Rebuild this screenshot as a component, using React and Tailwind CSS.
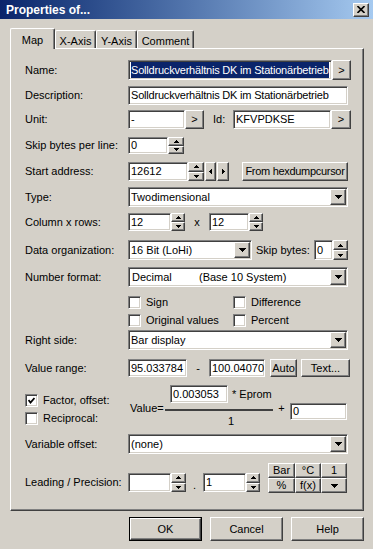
const sunken = "bg-white border border-t-[#808080] border-l-[#808080] border-b-white border-r-white shadow-[inset_1px_1px_0_#404040,inset_-1px_-1px_0_#d4d0c8]"
const raised = "bg-[#d4d0c8] border border-t-white border-l-white border-b-[#404040] border-r-[#404040] shadow-[inset_-1px_-1px_0_#808080]"

const Up = () => <svg width="5" height="3" viewBox="0 0 5 3" shapeRendering="crispEdges"><polygon points="0,3 5,3 2.5,0" fill="#000" /></svg>
const Dn = ({ w = 5, h = 3 }) => <svg width={w} height={h} viewBox={`0 0 ${w} ${h}`} shapeRendering="crispEdges"><polygon points={`0,0 ${w},0 ${w / 2},${h}`} fill="#000" /></svg>
const Lt = () => <svg width="3" height="5" viewBox="0 0 3 5" shapeRendering="crispEdges"><polygon points="3,0 3,5 0,2.5" fill="#000" /></svg>
const Rt = () => <svg width="3" height="5" viewBox="0 0 3 5" shapeRendering="crispEdges"><polygon points="0,0 0,5 3,2.5" fill="#000" /></svg>

function Label({ children }) {
  return <div className="w-[103px] shrink-0 whitespace-nowrap">{children}</div>
}

function Input({ cls, sel, children }) {
  return (
    <div className={`${sunken} ${cls} shrink-0 flex items-center pl-[2px] overflow-hidden whitespace-nowrap`}>
      {sel ? <span className="bg-[#0a246a] text-white">{children}</span> : children}
    </div>
  )
}

function Btn({ cls, children }) {
  return <div className={`${raised} ${cls} shrink-0 flex items-center justify-center whitespace-nowrap`}>{children}</div>
}

function Combo({ cls, children }) {
  return (
    <div className={`${sunken} ${cls} shrink-0 flex items-center pl-[2px] pr-[1px]`}>
      <div className="flex-1 whitespace-nowrap overflow-hidden">{children}</div>
      <Btn cls="w-[16px] h-[16px]"><Dn w={7} h={4} /></Btn>
    </div>
  )
}

function Spin({ cls }) {
  return (
    <div className={`${cls} shrink-0 flex flex-col`}>
      <Btn cls="flex-1"><Up /></Btn>
      <Btn cls="flex-1"><Dn /></Btn>
    </div>
  )
}

function Check({ on }) {
  return (
    <div className={`${sunken} w-[13px] h-[13px] shrink-0 flex items-center justify-center`}>
      {on && <svg width="7" height="7" viewBox="0 0 7 7"><polyline points="0.5,3 2.5,5.5 6.5,1" fill="none" stroke="#000" strokeWidth="1.8" /></svg>}
    </div>
  )
}

function Tab({ cls, children }) {
  return (
    <div className={`bg-[#d4d0c8] border-t border-l border-t-white border-l-white border-r border-r-[#404040] shadow-[inset_-1px_0_0_#808080] rounded-t-[2px] flex justify-center ${cls}`}>
      {children}
    </div>
  )
}

export default function App() {
  return (
    <div className="w-[373px] h-[549px] bg-[#d4d0c8] overflow-hidden text-[11px] text-black font-['Liberation_Sans',Arial,sans-serif]">
      {/* title bar */}
      <div className="h-[19px] flex items-center bg-linear-to-r from-[#0a246a] to-[#a6caf0]">
        <span className="pl-[6px] text-white font-bold text-[12px]">Properties of...</span>
        <div className={`${raised} ml-auto mr-[4px] w-[16px] h-[14px] flex items-center justify-center`}>
          <svg width="8" height="7" viewBox="0 0 8 7"><path d="M0.5 0 L7.5 7 M7.5 0 L0.5 7" stroke="#000" strokeWidth="1.6" /></svg>
        </div>
      </div>

      {/* tabs */}
      <div className="mt-[9px] h-[21px] pl-[10px] flex items-end relative z-10">
        <Tab cls="w-[45px] h-[21px] pt-[3px]">Map</Tab>
        <Tab cls="w-[41px] h-[18px] mb-[1px] pt-[2px]">X-Axis</Tab>
        <Tab cls="w-[41px] h-[18px] mb-[1px] pt-[2px]">Y-Axis</Tab>
        <Tab cls="w-[57px] h-[18px] mb-[1px] pt-[2px]">Comment</Tab>
      </div>

      {/* panel */}
      <div className="mt-[-1px] ml-[10px] w-[354px] h-[463px] border border-t-white border-l-white border-b-[#404040] border-r-[#404040] shadow-[inset_-1px_-1px_0_#808080] flex flex-col pl-[14px]">
        <div className="mt-[11px] h-[20px] flex items-center">
          <Label>Name:</Label>
          <Input cls="w-[204px] h-[20px] tracking-[-0.2px]" sel>Solldruckverhältnis DK im Stationärbetrieb</Input>
          <Btn cls="w-[19px] h-[20px]">&gt;</Btn>
        </div>

        <div className="mt-[6px] h-[19px] flex items-center">
          <Label>Description:</Label>
          <Input cls="w-[220px] h-[19px] tracking-[-0.2px]">Solldruckverhältnis DK im Stationärbetrieb</Input>
        </div>

        <div className="mt-[5px] h-[19px] flex items-center">
          <Label>Unit:</Label>
          <Input cls="w-[57px] h-[19px]">-</Input>
          <Btn cls="w-[19px] h-[19px]">&gt;</Btn>
          <span className="ml-[9px] w-[20px]">Id:</span>
          <Input cls="w-[98px] h-[19px]">KFVPDKSE</Input>
          <Btn cls="w-[20px] h-[19px]">&gt;</Btn>
        </div>

        <div className="mt-[8px] h-[17px] flex items-center">
          <Label>Skip bytes per line:</Label>
          <Input cls="w-[40px] h-[17px]">0</Input>
          <Spin cls="w-[16px] h-[17px]" />
        </div>

        <div className="mt-[8px] h-[19px] flex items-center">
          <Label>Start address:</Label>
          <Input cls="w-[60px] h-[19px]">12612</Input>
          <Spin cls="w-[16px] h-[19px]" />
          <Btn cls="ml-[1px] w-[11px] h-[19px]"><Lt /></Btn>
          <Btn cls="ml-[1px] w-[12px] h-[19px]"><Rt /></Btn>
          <Btn cls="ml-[13px] w-[106px] h-[19px] tracking-[-0.3px]">From hexdumpcursor</Btn>
        </div>

        <div className="mt-[6px] h-[20px] flex items-center">
          <Label>Type:</Label>
          <Combo cls="w-[220px] h-[20px]">Twodimensional</Combo>
        </div>

        <div className="mt-[6px] h-[18px] flex items-center">
          <Label>Column x rows:</Label>
          <Input cls="w-[43px] h-[18px]">12</Input>
          <Spin cls="w-[14px] h-[18px]" />
          <span className="w-[24px] text-center">x</span>
          <Input cls="w-[40px] h-[18px]">12</Input>
          <Spin cls="w-[14px] h-[18px]" />
        </div>

        <div className="mt-[9px] h-[20px] flex items-center">
          <Label>Data organization:</Label>
          <Combo cls="w-[124px] h-[20px]">16 Bit (LoHi)</Combo>
          <span className="ml-[4px] w-[58px] whitespace-nowrap">Skip bytes:</span>
          <Input cls="w-[19px] h-[20px]">0</Input>
          <Spin cls="w-[15px] h-[20px]" />
        </div>

        <div className="mt-[7px] h-[20px] flex items-center">
          <Label>Number format:</Label>
          <Combo cls="w-[220px] h-[20px]">
            <span className="inline-block w-[68px] pl-[1px]">Decimal</span>
            <span>(Base 10 System)</span>
          </Combo>
        </div>

        <div className="mt-[9px] h-[13px] flex items-center">
          <div className="w-[103px]" />
          <div className="w-[105px] flex items-center gap-[5px]"><Check /><span>Sign</span></div>
          <div className="flex items-center gap-[5px]"><Check /><span>Difference</span></div>
        </div>
        <div className="mt-[5px] h-[13px] flex items-center">
          <div className="w-[103px]" />
          <div className="w-[105px] flex items-center gap-[5px]"><Check /><span>Original values</span></div>
          <div className="flex items-center gap-[5px]"><Check /><span>Percent</span></div>
        </div>

        <div className="mt-[3px] h-[20px] flex items-center">
          <Label>Right side:</Label>
          <Combo cls="w-[220px] h-[20px]">Bar display</Combo>
        </div>

        <div className="mt-[9px] h-[18px] flex items-center">
          <Label>Value range:</Label>
          <Input cls="w-[59px] h-[18px]">95.033784</Input>
          <span className="w-[22px] text-center">-</span>
          <Input cls="w-[56px] h-[18px]">100.04070</Input>
          <Btn cls="ml-[5px] w-[27px] h-[18px]">Auto</Btn>
          <Btn cls="ml-[4px] w-[49px] h-[18px]">Text...</Btn>
        </div>

        {/* factor / offset formula */}
        <div className="mt-[8px] h-[43px] flex items-start">
          <div className="w-[105px] flex flex-col">
            <div className="mt-[9px] h-[13px] flex items-center gap-[5px]"><Check on /><span>Factor, offset:</span></div>
            <div className="mt-[5px] h-[13px] flex items-center gap-[5px]"><Check /><span>Reciprocal:</span></div>
          </div>
          <span className="mt-[17px] w-[35px] leading-[13px]">Value=</span>
          <div className="w-[108px] flex flex-col">
            <div className="flex items-center">
              <Input cls="ml-[5px] w-[58px] h-[18px]">0.003053</Input>
              <span className="ml-[4px] whitespace-nowrap">* Eprom</span>
            </div>
            <div className="mt-[6px] h-[2px] bg-[#404040]" />
            <span className="mt-[4px] pl-[63px] leading-[13px]">1</span>
          </div>
          <span className="mt-[17px] w-[17px] text-center leading-[13px]">+</span>
          <Input cls="mt-[18px] w-[57px] h-[17px]">0</Input>
        </div>

        <div className="mt-[6px] h-[20px] flex items-center">
          <Label>Variable offset:</Label>
          <Combo cls="w-[220px] h-[20px]">(none)</Combo>
        </div>

        <div className="mt-[9px] h-[30px] flex items-start">
          <div className="mt-[13px] w-[103px] leading-[13px] whitespace-nowrap">Leading / Precision:</div>
          <Input cls="mt-[10px] w-[43px] h-[19px]"></Input>
          <Spin cls="mt-[10px] w-[15px] h-[19px]" />
          <span className="mt-[16px] w-[17px] text-center leading-[13px]">.</span>
          <Input cls="mt-[10px] w-[43px] h-[19px]">1</Input>
          <Spin cls="mt-[10px] w-[14px] h-[19px]" />
          <div className="ml-[8px] grid grid-cols-[27px_26px_26px] grid-rows-[15px_15px]">
            <Btn>Bar</Btn>
            <Btn>°C</Btn>
            <Btn>1</Btn>
            <Btn>%</Btn>
            <Btn>f(x)</Btn>
            <Btn><Dn w={7} h={4} /></Btn>
          </div>
        </div>
      </div>

      {/* dialog buttons */}
      <div className="mt-[6px] pl-[129px] flex gap-[8px]">
        <div className="w-[73px] h-[24px] border border-black">
          <Btn cls="w-full h-full">OK</Btn>
        </div>
        <Btn cls="w-[73px] h-[24px]">Cancel</Btn>
        <Btn cls="w-[73px] h-[24px]">Help</Btn>
      </div>
    </div>
  )
}
